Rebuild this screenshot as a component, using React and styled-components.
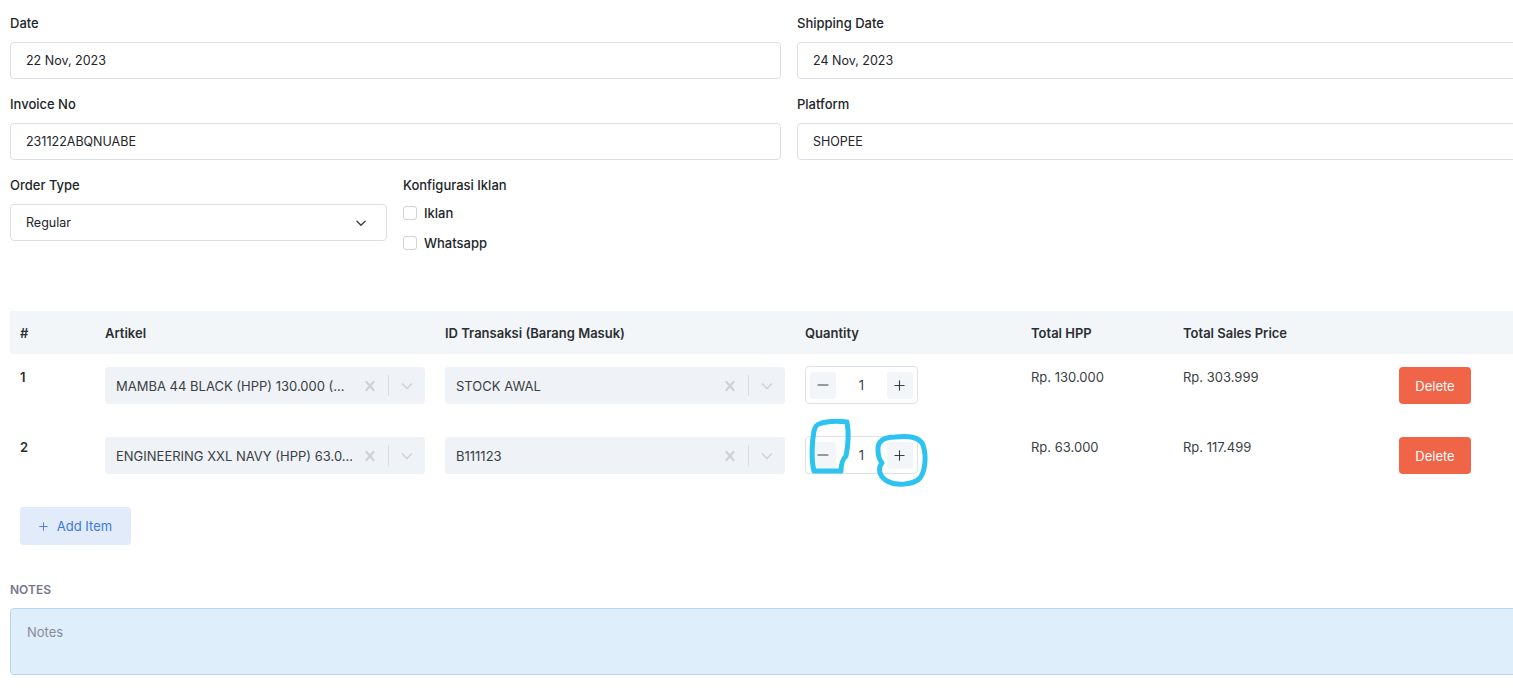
import React from "react"
import styled, { createGlobalStyle } from "styled-components"

const GlobalStyle = createGlobalStyle`
  html, body {
    margin: 0;
    padding: 0;
    background: #fff;
    overflow: hidden;
  }
  body {
    font-family: Inter, "Noto Sans", sans-serif;
    font-size: 13px;
    color: #212529;
  }
  * { box-sizing: border-box; }
`

const Page = styled.div`
  width: 1568px;
  padding: 14px 0 0 10px;
`

const FormGrid = styled.div`
  display: grid;
  grid-template-columns: 771px 771px;
  column-gap: 16px;
  row-gap: 16px;
`

const Field = styled.div`
  display: flex;
  flex-direction: column;
`

const Label = styled.label`
  display: block;
  height: 18px;
  line-height: 18px;
  margin-bottom: 10px;
  font-size: 13px;
  font-weight: 500;
  color: #212529;
`

const Input = styled.div`
  height: 37px;
  display: flex;
  align-items: center;
  padding: 0 15px;
  border: 1px solid #dcdfe3;
  border-radius: 4px;
  font-size: 12.5px;
  color: #212529;
  background: #fff;
`

const OrderRow = styled.div`
  display: flex;
  gap: 16px;
  margin-top: 16px;
`

const SelectBox = styled(Input)`
  width: 377px;
  justify-content: space-between;
  padding-right: 16px;
`

const CheckList = styled.div`
  display: flex;
  flex-direction: column;
  gap: 12px;
`

const CheckItem = styled.label`
  display: flex;
  align-items: center;
  gap: 7px;
  height: 18px;
  font-size: 13px;
  font-weight: 500;
  color: #212529;
`

const Box = styled.span`
  width: 14px;
  height: 14px;
  border: 1px solid #ced4da;
  border-radius: 3px;
  background: #fff;
`

const Table = styled.div`
  margin-top: 59px;
`

const Row = styled.div`
  display: grid;
  grid-template-columns: 85px 340px 360px 226px 152px 216px 1fr;
  align-items: ${p => (p.$head ? "center" : "start")};
  height: ${p => (p.$head ? "43px" : "70px")};
  padding-top: ${p => (p.$head ? "0" : "13px")};
  background: ${p => (p.$head ? "#f3f6f9" : "transparent")};
`

const Cell = styled.div`
  padding: ${p => (p.$text ? "1px 10px 0" : "0 10px")};
  font-size: 13px;
  line-height: 18px;
  font-weight: ${p => (p.$bold ? 600 : 400)};
  color: ${p => (p.$bold ? "#2b2f33" : "#3a3f44")};
  position: relative;
`

const HeadCell = styled.div`
  padding: 0 10px;
  font-size: 13px;
  font-weight: 600;
  color: #2b2f33;
`

const RSelect = styled.div`
  height: 37px;
  display: flex;
  align-items: center;
  background: #eff2f6;
  border-radius: 4px;
`

const RValue = styled.div`
  flex: 1;
  padding-left: 11px;
  font-size: 13px;
  color: #3a3f44;
  white-space: nowrap;
  overflow: hidden;
`

const Indicator = styled.div`
  width: 36px;
  display: flex;
  justify-content: center;
  color: #cfd3d8;
`

const Separator = styled.span`
  width: 1px;
  height: 21px;
  background: #dadde1;
`

const Stepper = styled.div`
  width: 113px;
  height: 38px;
  margin-top: -1px;
  display: flex;
  align-items: center;
  justify-content: space-between;
  padding: 0 4px;
  border: 1px solid #dee2e6;
  border-radius: 4px;
  background: #fff;
`

const StepBtn = styled.button`
  width: 26px;
  height: 27px;
  border: none;
  border-radius: 3px;
  background: #f3f6f9;
  color: #3a3f44;
  padding: 0;
  display: flex;
  align-items: center;
  justify-content: center;
`

const Qty = styled.span`
  font-size: 13px;
  color: #3a3f44;
`

const DeleteButton = styled.button`
  width: 72px;
  height: 37px;
  border: none;
  border-radius: 4px;
  background: #f06548;
  color: #fff;
  font-family: inherit;
  font-size: 13px;
`

const AddButton = styled.button`
  margin: 13px 0 0 10px;
  width: 111px;
  height: 38px;
  border: none;
  border-radius: 4px;
  background: #e2ebfa;
  color: #3d78e3;
  font-family: inherit;
  font-size: 13px;
  display: flex;
  align-items: center;
  justify-content: center;
  gap: 9px;
`

const NotesLabel = styled.div`
  margin-top: 37px;
  font-size: 12px;
  font-weight: 600;
  color: #74788d;
  text-transform: uppercase;
  line-height: 16px;
`

const Notes = styled.div`
  margin-top: 10px;
  height: 67px;
  padding: 15px 16px;
  background: #dfeefb;
  border: 1px solid #b6d8f3;
  border-radius: 4px;
  color: #878a99;
  font-size: 13px;
`

const Scribble = styled.svg`
  position: absolute;
  left: 10px;
  top: -16px;
  overflow: visible;
  pointer-events: none;
`

const Cross = () => (
  <svg width="20" height="20" viewBox="0 0 20 20" fill="currentColor">
    <path d="M14.348 14.849c-0.469 0.469-1.229 0.469-1.697 0l-2.651-3.030-2.651 3.029c-0.469 0.469-1.229 0.469-1.697 0-0.469-0.469-0.469-1.229 0-1.697l2.758-3.15-2.759-3.152c-0.469-0.469-0.469-1.228 0-1.697s1.228-0.469 1.697 0l2.652 3.031 2.651-3.031c0.469-0.469 1.228-0.469 1.697 0s0.469 1.229 0 1.697l-2.758 3.152 2.758 3.15c0.469 0.469 0.469 1.229 0 1.698z" />
  </svg>
)

const Chevron = ({ color = "currentColor", size = 20 }) => (
  <svg width={size} height={size} viewBox="0 0 20 20" fill="none" stroke={color} strokeWidth="1.5" strokeLinecap="round" strokeLinejoin="round">
    <path d="M5.5 8l4.5 4.5L14.5 8" />
  </svg>
)

// thin plus / minus glyphs used by the stepper and the add button
const Sign = ({ plus, size = 12 }) => (
  <svg width={size} height={size} viewBox="0 0 12 12" fill="none" stroke="currentColor" strokeWidth="1.2" strokeLinecap="round">
    <path d="M1 6h10" />
    {plus && <path d="M6 1v10" />}
  </svg>
)

function ReactSelect({ value }) {
  return (
    <RSelect>
      <RValue>{value}</RValue>
      <Indicator><Cross /></Indicator>
      <Separator />
      <Indicator><Chevron /></Indicator>
    </RSelect>
  )
}

function QtyStepper({ marked }) {
  return (
    <>
      <Stepper>
        <StepBtn><Sign /></StepBtn>
        <Qty>1</Qty>
        <StepBtn><Sign plus size={11} /></StepBtn>
      </Stepper>
      {marked && (
        <Scribble width="140" height="80" viewBox="0 0 140 80">
          <g fill="none" stroke="#2cc3f1" strokeWidth="5" strokeLinecap="round" strokeLinejoin="round">
            <path d="M14 3 C22 0, 34 0, 42 1 C44 12, 43 25, 41 35 C38 38, 36 41, 36 50 L9 50 C6 39, 7 20, 9 10 C10 6, 11 4, 14 3 Z" />
            <path d="M73 30 C72 20, 79 16, 90 16 C103 15, 114 15, 118 24 C122 36, 120 52, 114 58 C107 64, 91 65, 82 60 C75 56, 72 48, 77 42 C74 38, 73 34, 73 30 Z" />
          </g>
        </Scribble>
      )}
    </>
  )
}

const rows = [
  { no: 1, artikel: "MAMBA 44 BLACK (HPP) 130.000 (...", trx: "STOCK AWAL", hpp: "Rp. 130.000", sales: "Rp. 303.999" },
  { no: 2, artikel: "ENGINEERING XXL NAVY (HPP) 63.0...", trx: "B111123", hpp: "Rp. 63.000", sales: "Rp. 117.499", marked: true },
]

export default function App() {
  return (
    <>
      <GlobalStyle />
      <Page>
        <FormGrid>
          <Field>
            <Label>Date</Label>
            <Input>22 Nov, 2023</Input>
          </Field>
          <Field>
            <Label>Shipping Date</Label>
            <Input>24 Nov, 2023</Input>
          </Field>
          <Field>
            <Label>Invoice No</Label>
            <Input>231122ABQNUABE</Input>
          </Field>
          <Field>
            <Label>Platform</Label>
            <Input>SHOPEE</Input>
          </Field>
        </FormGrid>

        <OrderRow>
          <Field>
            <Label>Order Type</Label>
            <SelectBox>
              Regular
              <Chevron color="#3a3f44" size={18} />
            </SelectBox>
          </Field>
          <Field>
            <Label>Konfigurasi Iklan</Label>
            <CheckList>
              <CheckItem><Box />Iklan</CheckItem>
              <CheckItem><Box />Whatsapp</CheckItem>
            </CheckList>
          </Field>
        </OrderRow>

        <Table>
          <Row $head>
            <HeadCell>#</HeadCell>
            <HeadCell>Artikel</HeadCell>
            <HeadCell>ID Transaksi (Barang Masuk)</HeadCell>
            <HeadCell>Quantity</HeadCell>
            <HeadCell>Total HPP</HeadCell>
            <HeadCell>Total Sales Price</HeadCell>
            <HeadCell />
          </Row>
          {rows.map(r => (
            <Row key={r.no}>
              <Cell $text $bold>{r.no}</Cell>
              <Cell><ReactSelect value={r.artikel} /></Cell>
              <Cell><ReactSelect value={r.trx} /></Cell>
              <Cell><QtyStepper marked={r.marked} /></Cell>
              <Cell $text>{r.hpp}</Cell>
              <Cell $text>{r.sales}</Cell>
              <Cell><DeleteButton>Delete</DeleteButton></Cell>
            </Row>
          ))}
        </Table>

        <AddButton><Sign plus size={9} />Add Item</AddButton>

        <NotesLabel>Notes</NotesLabel>
        <Notes>Notes</Notes>
      </Page>
    </>
  )
}
